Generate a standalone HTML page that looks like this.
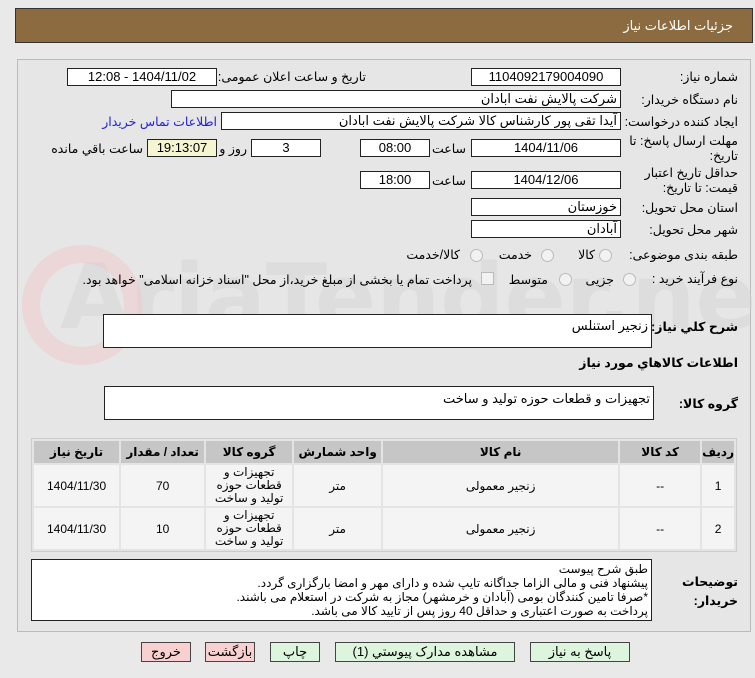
<!DOCTYPE html>
<html><head><meta charset="utf-8"><style>
body{margin:0;width:755px;height:678px;background:#e9e9e9;font-family:"Liberation Sans","DejaVu Sans",sans-serif;font-size:12px;color:#000;position:relative;overflow:hidden;direction:rtl}
.a{position:absolute}
.box{position:absolute;background:#fff;border:1px solid #222;box-sizing:border-box;font-size:13px;padding:0 3px;line-height:15px;white-space:nowrap;overflow:hidden}
.c{text-align:center}
.lbl{position:absolute;font-size:12.5px;white-space:nowrap}
.btn{position:absolute;top:642px;height:20px;border:1px solid #444;box-sizing:border-box;text-align:center;font-size:13px;line-height:18px}
table{border-collapse:separate;border-spacing:2px;position:absolute;left:31px;top:438px;width:706px;background:#e4e4e4;border:1px solid #ccc}
td,th{background:#f4f4f4;text-align:center;font-size:12px;padding:0}
th{background:#c6c6c6;height:22px;font-weight:bold}
.rad{position:absolute;width:11px;height:11px;border:1px solid #bbb;border-radius:50%;background:#f2f2f2}
</style></head><body>
<div class="a" style="left:15px;top:8px;width:738px;height:35px;background:#8c6b41;border:1px solid #333;box-sizing:border-box"></div>
<div class="lbl" style="right:22px;top:18px;color:#fff;font-size:13px">جزئیات اطلاعات نیاز</div>
<div class="a" style="left:17px;top:59px;width:734px;height:573px;border:1px solid #bbb;box-sizing:border-box;background:#e6e6e6"></div>
<div class="a" style="left:60px;top:245px;font-size:90px;font-weight:bold;color:#d4d4d4;direction:ltr;opacity:.45;font-family:'DejaVu Sans',sans-serif">AriaTender.net</div>
<div class="a" style="left:22px;top:245px;width:120px;height:120px;border:18px solid #f0c8c8;border-radius:50%;box-sizing:border-box;opacity:.5"></div>

<div class="lbl" style="right:17px;top:69px">شماره نیاز:</div>
<div class="box c" style="left:471px;top:68px;width:150px;height:18px">1104092179004090</div>
<div class="lbl" style="right:389px;top:69px">تاریخ و ساعت اعلان عمومی:</div>
<div class="box c" style="left:67px;top:68px;width:150px;height:18px">1404/11/02 - 12:08</div>

<div class="lbl" style="right:17px;top:92px">نام دستگاه خریدار:</div>
<div class="box" style="left:171px;top:90px;width:450px;height:18px">شرکت پالایش نفت ابادان</div>

<div class="lbl" style="right:17px;top:114px">ایجاد کننده درخواست:</div>
<div class="box" style="left:221px;top:112px;width:400px;height:18px">آیدا تقی پور کارشناس کالا شرکت پالایش نفت ابادان</div>
<div class="lbl" style="right:538px;top:114px;color:#2222dd">اطلاعات تماس خریدار</div>

<div class="lbl" style="right:17px;top:134px;line-height:15px">مهلت ارسال پاسخ: تا<br>تاریخ:</div>
<div class="box c" style="left:471px;top:139px;width:150px;height:18px">1404/11/06</div>
<div class="lbl" style="right:289px;top:141px">ساعت</div>
<div class="box c" style="left:360px;top:139px;width:70px;height:18px">08:00</div>
<div class="box c" style="left:251px;top:139px;width:70px;height:18px">3</div>
<div class="lbl" style="right:508px;top:141px">روز و</div>
<div class="box c" style="left:147px;top:139px;width:70px;height:18px;background:#f5f5d2">19:13:07</div>
<div class="lbl" style="right:612px;top:141px">ساعت باقي مانده</div>

<div class="lbl" style="right:17px;top:166px;line-height:15px">حداقل تاریخ اعتبار<br>قیمت: تا تاریخ:</div>
<div class="box c" style="left:471px;top:171px;width:150px;height:18px">1404/12/06</div>
<div class="lbl" style="right:289px;top:173px">ساعت</div>
<div class="box c" style="left:360px;top:171px;width:70px;height:18px">18:00</div>

<div class="lbl" style="right:17px;top:200px">استان محل تحویل:</div>
<div class="box" style="left:471px;top:198px;width:150px;height:18px">خوزستان</div>
<div class="lbl" style="right:17px;top:222px">شهر محل تحویل:</div>
<div class="box" style="left:471px;top:220px;width:150px;height:18px">آبادان</div>

<div class="lbl" style="right:17px;top:247px">طبقه بندی موضوعی:</div>
<div class="rad" style="left:599px;top:249px"></div><div class="lbl" style="right:160px;top:247px">کالا</div>
<div class="rad" style="left:541px;top:249px"></div><div class="lbl" style="right:223px;top:247px">خدمت</div>
<div class="rad" style="left:470px;top:249px"></div><div class="lbl" style="right:295px;top:247px">کالا/خدمت</div>

<div class="lbl" style="right:17px;top:271px">نوع فرآیند خرید :</div>
<div class="rad" style="left:623px;top:273px"></div><div class="lbl" style="right:141px;top:272px">جزیی</div>
<div class="rad" style="left:559px;top:273px"></div><div class="lbl" style="right:207px;top:272px">متوسط</div>
<div class="a" style="left:481px;top:272px;width:11px;height:11px;border:1px solid #bbb;background:#f2f2f2"></div>
<div class="lbl" style="right:283px;top:272px">پرداخت تمام یا بخشی از مبلغ خرید،از محل "اسناد خزانه اسلامی" خواهد بود.</div>

<div class="lbl" style="right:17px;top:319px;font-weight:bold">شرح کلي نیاز:</div>
<div class="box" style="left:103px;top:314px;width:549px;height:34px;padding-top:3px">زنجیر استنلس</div>
<div class="lbl" style="right:17px;top:355px;font-weight:bold">اطلاعات کالاهاي مورد نیاز</div>
<div class="lbl" style="right:17px;top:396px;font-weight:bold">گروه کالا:</div>
<div class="box" style="left:104px;top:386px;width:550px;height:34px;padding-top:4px">تجهیزات و قطعات حوزه تولید و ساخت</div>

<table>
<tr><th style="width:26px">ردیف</th><th style="width:80px">کد کالا</th><th style="width:235px">نام کالا</th><th style="width:87px">واحد شمارش</th><th style="width:86px">گروه کالا</th><th style="width:83px">تعداد / مقدار</th><th>تاریخ نیاز</th></tr>
<tr style="height:41px"><td>1</td><td>--</td><td>زنجیر معمولی</td><td>متر</td><td style="line-height:13px">تجهیزات و قطعات حوزه تولید و ساخت</td><td>70</td><td>1404/11/30</td></tr>
<tr style="height:41px"><td>2</td><td>--</td><td>زنجیر معمولی</td><td>متر</td><td style="line-height:13px">تجهیزات و قطعات حوزه تولید و ساخت</td><td>10</td><td>1404/11/30</td></tr>
</table>

<div class="lbl" style="right:17px;top:573px;font-weight:bold;line-height:19px">توضیحات<br>خریدار:</div>
<div class="box" style="left:31px;top:559px;width:621px;height:62px;font-size:12px;line-height:14px;padding-top:2px">طبق شرح پیوست<br>پیشنهاد فنی و مالی الزاما جداگانه تایپ شده و دارای مهر و امضا بارگزاری گردد.<br>*صرفا تامین کنندگان بومی (آبادان و خرمشهر) مجاز به شرکت در استعلام می باشند.<br>پرداخت به صورت اعتباری و حداقل 40 روز پس از تایید کالا می باشد.</div>

<div class="btn" style="left:530px;width:100px;background:#dcf5dc">پاسخ به نیاز</div>
<div class="btn" style="left:335px;width:180px;background:#dcf5dc">مشاهده مدارک پیوستي (1)</div>
<div class="btn" style="left:270px;width:50px;background:#dcf5dc">چاپ</div>
<div class="btn" style="left:205px;width:50px;background:#f8d0d0">بازگشت</div>
<div class="btn" style="left:141px;width:50px;background:#f8d0d0">خروج</div>
</body></html>
